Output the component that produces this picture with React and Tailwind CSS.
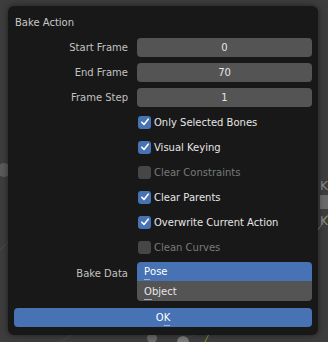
import React from "react";

const font = { fontFamily: '"DejaVu Sans", sans-serif' };

function NumField({ label, value }) {
  return (
    <div className="flex h-[20px] items-center">
      <div className="w-[114px] text-right text-[#c2c2c2]">{label}</div>
      <div className="ml-[9px] flex h-[19px] flex-1 items-center justify-center rounded-[4px] bg-[#545454] text-[#e6e6e6]">
        {value}
      </div>
    </div>
  );
}

function Check({ label, checked = true, disabled = false }) {
  return (
    <div className="flex h-[20px] items-center pl-[124px]">
      {checked ? (
        <div className="flex h-[13px] w-[13px] items-center justify-center rounded-[3px] bg-[#4772b3]">
          <svg width="10" height="10" viewBox="0 0 10 10">
            <path d="M1.8 5.2 L4 7.4 L8.2 2.2" fill="none" stroke="#ffffff" strokeWidth="1.6" strokeLinecap="round" strokeLinejoin="round" />
          </svg>
        </div>
      ) : (
        <div className="h-[13px] w-[13px] rounded-[3px] bg-[#464646]" />
      )}
      <span className={"ml-[3px] " + (disabled ? "text-[#7a7a7a]" : "text-[#e6e6e6]")}>{label}</span>
    </div>
  );
}

function Key({ children }) {
  return <span className="underline decoration-[#9fb3d0] decoration-1 underline-offset-[4px]">{children}</span>;
}

export default function App() {
  return (
    <div className="relative h-[342px] w-[328px] overflow-hidden bg-[#3d3d3d] text-[10px]" style={font}>
      <svg className="absolute inset-0" width="328" height="342" viewBox="0 0 328 342">
        <line x1="0" y1="250" x2="10" y2="240" stroke="#4a4a4a" strokeWidth="1" />
        <line x1="60" y1="342" x2="80" y2="330" stroke="#4a4a4a" strokeWidth="1" />
        <line x1="180" y1="342" x2="200" y2="332" stroke="#4a4a4a" strokeWidth="1" />
        <line x1="318" y1="230" x2="328" y2="215" stroke="#6b8a3a" strokeWidth="1" />
        <line x1="205" y1="342" x2="210" y2="332" stroke="#7aa030" strokeWidth="1" />
        <circle cx="4" cy="170" r="7" fill="#5a5a5a" />
        <circle cx="152" cy="338" r="5" fill="#6a6a6a" />
        <circle cx="183" cy="342" r="6" fill="#7a7a7a" />
        <text x="320" y="190" fill="#8a8a8a" fontSize="12" style={font}>K</text>
        <text x="320" y="225" fill="#8a8a8a" fontSize="12" style={font}>K</text>
        <rect x="320" y="195" width="8" height="14" fill="#6a6a6a" />
      </svg>
      <div className="relative pl-[8px] pt-[6px]">
        <div className="flex h-[329px] w-[310px] flex-col rounded-[6px] bg-[#181818] px-[6px] shadow-[0_0_6px_rgba(0,0,0,0.5)]">
          <div className="flex h-[31px] items-center pl-[1px] pt-[1px] text-[#c8c8c8]">Bake Action</div>
          <div className="flex flex-col gap-[5px]">
            <NumField label="Start Frame" value="0" />
            <NumField label="End Frame" value="70" />
            <NumField label="Frame Step" value="1" />
            <Check label="Only Selected Bones" />
            <Check label="Visual Keying" />
            <Check label="Clear Constraints" checked={false} disabled />
            <Check label="Clear Parents" />
            <Check label="Overwrite Current Action" />
            <Check label="Clean Curves" checked={false} disabled />
          </div>
          <div className="mt-[5px] flex">
            <div className="w-[114px] pt-[4px] text-right text-[#c2c2c2]">Bake Data</div>
            <div className="ml-[9px] flex flex-1 flex-col overflow-hidden rounded-[4px]">
              <div className="flex h-[19px] items-center bg-[#4772b3] pl-[7px] text-[#ffffff]">
                <Key>P</Key>ose
              </div>
              <div className="flex h-[20px] items-center bg-[#545454] pl-[7px] text-[#e6e6e6]">
                <Key>O</Key>bject
              </div>
            </div>
          </div>
          <div className="mt-[7px] flex h-[19px] items-center justify-center rounded-[4px] bg-[#4772b3] text-[#ffffff]">
            O<Key>K</Key>
          </div>
        </div>
      </div>
    </div>
  );
}
